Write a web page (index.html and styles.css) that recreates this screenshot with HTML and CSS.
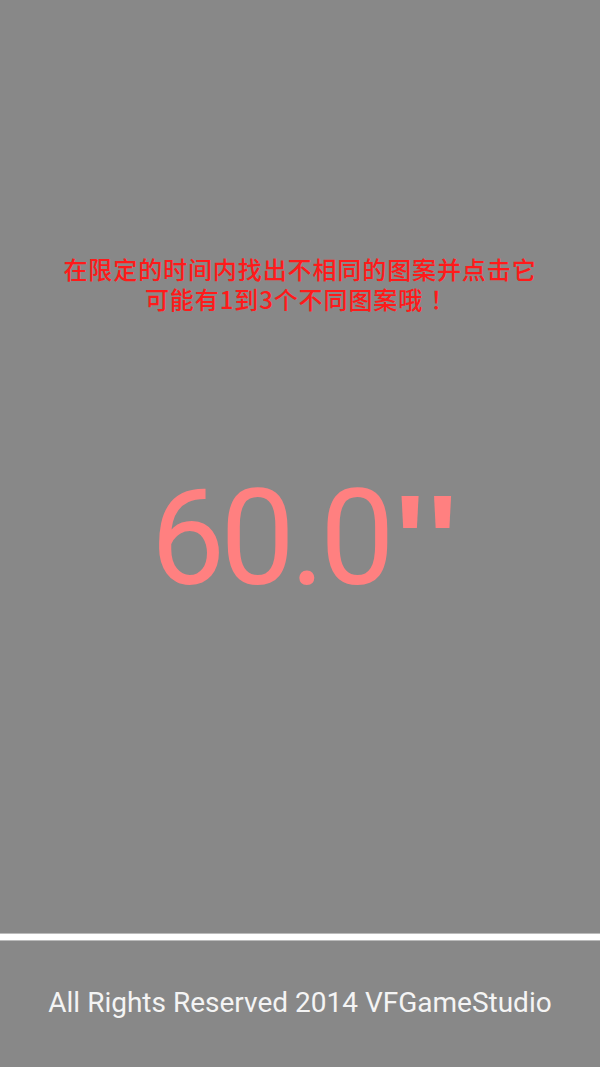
FILE: index.html
```html
<!DOCTYPE html>
<html lang="zh">
<head>
<meta charset="utf-8">
<link rel="stylesheet" href="styles.css">
</head>
<body>
<div class="screen">
  <main class="main">
    <div class="hint">
      <p class="hint-line">在限定的时间内找出不相同的图案并点击它</p>
      <p class="hint-line">可能有1到3个不同图案哦<span class="bang">！</span></p>
    </div>
    <div class="timer">60.0<span class="sec">''</span></div>
  </main>
  <div class="divider"></div>
  <footer class="footer">All Rights Reserved 2014 VFGameStudio</footer>
</div>
</body>
</html>
```

FILE: styles.css
```css
html, body {
  margin: 0;
  padding: 0;
  background: #888888;
}
.screen {
  width: 600px;
  height: 1067px;
  display: flex;
  flex-direction: column;
  background: #888888;
}
.main {
  height: 933px;
  display: flex;
  flex-direction: column;
  align-items: center;
}
.hint {
  margin-top: 254px;
  display: flex;
  flex-direction: column;
  align-items: center;
}
.hint-line {
  margin: 0;
  text-align: center;
  color: #ff1a1a;
  font-family: "Noto Sans CJK SC", "Roboto", sans-serif;
  font-size: 24px;
  font-weight: 500;
  line-height: 30px;
  height: 30px;
  letter-spacing: 0.9px;
}
.bang {
  margin-left: 7px;
}
.timer {
  margin-top: 150px;
  padding-left: 10px;
  color: #ff8080;
  font-family: "Roboto", sans-serif;
  font-size: 133px;
  line-height: 150px;
  letter-spacing: -5px;
}
.sec {
  display: inline-block;
  font-family: "Liberation Sans", sans-serif;
  font-size: 128px;
  font-weight: bold;
  letter-spacing: 2px;
  margin-left: 5px;
}
.divider {
  box-sizing: border-box;
  height: 8px;
  background: #ffffff;
  border-top: 1px solid #bbbbbb;
  border-bottom: 1px solid #bbbbbb;
}
.footer {
  flex: 1;
  display: flex;
  align-items: center;
  justify-content: center;
  color: #f4f4f4;
  font-family: "Roboto", sans-serif;
  font-size: 28px;
  padding-bottom: 4px;
}
```
